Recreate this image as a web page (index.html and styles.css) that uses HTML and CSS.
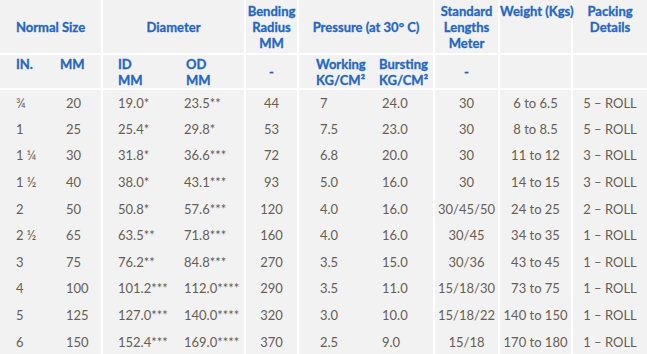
FILE: index.html
```html
<!DOCTYPE html>
<html lang="en">
<head>
    <meta charset="UTF-8">
    <meta name="viewport" content="width=device-width, initial-scale=1.0">
    <title>Hose Specifications</title>
    <link rel="stylesheet" href="styles.css">
</head>
<body>

    <table class="spec">
        <colgroup>
            <col class="c-in">
            <col class="c-mm">
            <col class="c-id">
            <col class="c-od">
            <col class="c-bend">
            <col class="c-work">
            <col class="c-burst">
            <col class="c-std">
            <col class="c-wt">
            <col class="c-pack">
        </colgroup>
        <thead>
            <tr class="head-1">
                <th colspan="2" class="mid">Normal Size</th>
                <th colspan="2" class="grp mid">Diameter</th>
                <th class="grp">Bending Radius MM</th>
                <th colspan="2" class="grp mid">Pressure (at 30° C)</th>
                <th class="grp">Standard Lengths Meter</th>
                <th class="grp nowrap">Weight (Kgs)</th>
                <th class="grp">Packing Details</th>
            </tr>
            <tr class="head-2">
                <th class="left">IN.</th>
                <th class="left mm">MM</th>
                <th class="grp left pad-id">ID<br>MM</th>
                <th class="left pad-od">OD<br>MM</th>
                <th class="grp mid">-</th>
                <th class="grp left pad-work">Working<br>KG/CM²</th>
                <th class="left pad-burst">Bursting<br>KG/CM²</th>
                <th class="grp mid">-</th>
                <th class="grp"></th>
                <th class="grp"></th>
            </tr>
        </thead>
        <tbody>
            <tr><td>¾</td><td>20</td><td class="grp">19.0*</td><td>23.5**</td><td class="grp ctr">44</td><td class="grp">7</td><td>24.0</td><td class="grp ctr">30</td><td class="grp ctr">6 to 6.5</td><td class="grp ctr">5 – ROLL</td></tr>
            <tr><td>1</td><td>25</td><td class="grp">25.4*</td><td>29.8*</td><td class="grp ctr">53</td><td class="grp">7.5</td><td>23.0</td><td class="grp ctr">30</td><td class="grp ctr">8 to 8.5</td><td class="grp ctr">5 – ROLL</td></tr>
            <tr><td>1 ¼</td><td>30</td><td class="grp">31.8*</td><td>36.6***</td><td class="grp ctr">72</td><td class="grp">6.8</td><td>20.0</td><td class="grp ctr">30</td><td class="grp ctr">11 to 12</td><td class="grp ctr">3 – ROLL</td></tr>
            <tr><td>1 ½</td><td>40</td><td class="grp">38.0*</td><td>43.1***</td><td class="grp ctr">93</td><td class="grp">5.0</td><td>16.0</td><td class="grp ctr">30</td><td class="grp ctr">14 to 15</td><td class="grp ctr">3 – ROLL</td></tr>
            <tr><td>2</td><td>50</td><td class="grp">50.8*</td><td>57.6***</td><td class="grp ctr">120</td><td class="grp">4.0</td><td>16.0</td><td class="grp ctr">30/45/50</td><td class="grp ctr">24 to 25</td><td class="grp ctr">2 – ROLL</td></tr>
            <tr><td>2 ½</td><td>65</td><td class="grp">63.5**</td><td>71.8***</td><td class="grp ctr">160</td><td class="grp">4.0</td><td>16.0</td><td class="grp ctr">30/45</td><td class="grp ctr">34 to 35</td><td class="grp ctr">1 – ROLL</td></tr>
            <tr><td>3</td><td>75</td><td class="grp">76.2**</td><td>84.8***</td><td class="grp ctr">270</td><td class="grp">3.5</td><td>15.0</td><td class="grp ctr">30/36</td><td class="grp ctr">43 to 45</td><td class="grp ctr">1 – ROLL</td></tr>
            <tr><td>4</td><td>100</td><td class="grp">101.2***</td><td>112.0****</td><td class="grp ctr">290</td><td class="grp">3.5</td><td>11.0</td><td class="grp ctr">15/18/30</td><td class="grp ctr">73 to 75</td><td class="grp ctr">1 – ROLL</td></tr>
            <tr><td>5</td><td>125</td><td class="grp">127.0***</td><td>140.0****</td><td class="grp ctr">320</td><td class="grp">3.0</td><td>10.0</td><td class="grp ctr">15/18/22</td><td class="grp ctr">140 to 150</td><td class="grp ctr">1 – ROLL</td></tr>
            <tr><td>6</td><td>150</td><td class="grp">152.4***</td><td>169.0****</td><td class="grp ctr">370</td><td class="grp">2.5</td><td>9.0</td><td class="grp ctr">15/18</td><td class="grp ctr">170 to 180</td><td class="grp ctr">1 – ROLL</td></tr>
        </tbody>
    </table>

</body>
</html>
```

FILE: styles.css
```css
body {
    margin: 0;
    background-color: #f2f2f2;
    font-family: Lato, "Open Sans", sans-serif;
}
.spec {
    width: 647px;
    table-layout: fixed;
    border-collapse: collapse;
    background-color: #f2f2f2;
    font-size: 13px;
}
.c-in { width: 50px; }
.c-mm { width: 52px; }
.c-id { width: 68px; }
.c-od { width: 75px; }
.c-bend { width: 53px; }
.c-work { width: 69px; }
.c-burst { width: 67px; }
.c-std { width: 65px; }
.c-wt { width: 73px; }
.c-pack { width: 75px; }

th, td {
    box-sizing: border-box;
}
th {
    color: #2466c6;
    font-weight: bold;
    -webkit-text-stroke: 0.3px #2466c6;
    line-height: 16px;
    padding: 0;
    text-align: center;
    vertical-align: top;
    border-bottom: 2px solid #fff;
}
.grp {
    border-left: 2px solid #fff;
}
.nowrap {
    white-space: nowrap;
}
.head-1 th {
    height: 54px;
    padding-top: 3px;
}
.head-1 th.mid {
    vertical-align: middle;
    padding-top: 0;
}
.head-2 th {
    height: 34px;
    padding-top: 1px;
}
.head-2 th.mid {
    vertical-align: middle;
    padding-top: 0;
}
.head-2 th.left {
    text-align: left;
    padding-left: 16px;
}
.head-2 th.mm { padding-left: 10px; }
.head-2 th.pad-id { padding-left: 15px; }
.head-2 th.pad-od { padding-left: 16px; }
.head-2 th.pad-work { padding-left: 17px; }
.head-2 th.pad-burst { padding-left: 12px; }

td {
    color: #675d55;
    height: 26.6px;
    padding: 0 0 0 16px;
    text-align: left;
    vertical-align: middle;
}
td.grp { padding-left: 15px; }
td.ctr {
    text-align: center;
    padding-left: 0;
}
tbody tr td:nth-child(4) { padding-left: 14px; }
tbody tr td:nth-child(6) { padding-left: 21px; }
tbody tr td:nth-child(7) { padding-left: 15px; }
```
